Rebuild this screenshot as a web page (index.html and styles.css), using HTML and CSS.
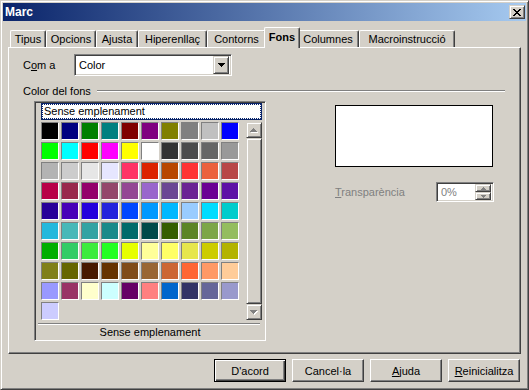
FILE: index.html
```html
<!DOCTYPE html>
<html lang="ca">
<head>
    <meta charset="UTF-8">
    <title>Marc</title>
    <link rel="stylesheet" href="styles.css">
</head>
<body>

<div class="window">
    <div class="titlebar">
        <span class="title">Marc</span>
        <div class="close raised">
            <svg width="8" height="7" viewBox="0 0 8 7" shape-rendering="crispEdges"><path d="M0 0h2v1H0zM6 0h2v1H6zM1 1h2v1H1zM5 1h2v1H5zM2 2h4v1H2zM3 3h2v1H3zM2 4h4v1H2zM1 5h2v1H1zM5 5h2v1H5zM0 6h2v1H0zM6 6h2v1H6z" fill="#000"/></svg>
        </div>
    </div>

    <div class="tabs">
        <div class="tab" style="width:36px">Tipus</div>
        <div class="tab" style="width:50px">Opcions</div>
        <div class="tab" style="width:42px">Ajusta</div>
        <div class="tab" style="width:69px">Hiperenllaç</div>
        <div class="tab" style="width:59px">Contorns</div>
        <div class="tab active" style="width:36px">Fons</div>
        <div class="tab" style="width:61px">Columnes</div>
        <div class="tab" style="width:96px">Macroinstrucció</div>
    </div>

    <div class="panel">
        <div class="row-as">
            <span class="label-as">C<u>o</u>m a</span>
            <div class="combo sunken">
                <span class="combo-text">Color</span>
                <div class="combo-btn raised">
                    <svg width="7" height="4" viewBox="0 0 7 4" shape-rendering="crispEdges"><path d="M0 0h7v1H6v1H5v1H4v1H3V3H2V2H1V1H0z" fill="#000"/></svg>
                </div>
            </div>
        </div>

        <div class="group-head">
            <span>Color del fons</span>
            <span class="rule"></span>
        </div>

        <div class="fill-area">
            <div class="palette sunken">
                <div class="none-item">Sense emplenament</div>
                <div class="palette-body">
                    <div class="swatches">
                        <span style="background:#000000"></span><span style="background:#000080"></span><span style="background:#008000"></span><span style="background:#008080"></span><span style="background:#800000"></span><span style="background:#800080"></span><span style="background:#808000"></span><span style="background:#808080"></span><span style="background:#c0c0c0"></span><span style="background:#0000ff"></span>
                        <span style="background:#00ff00"></span><span style="background:#00ffff"></span><span style="background:#ff0000"></span><span style="background:#ff00ff"></span><span style="background:#ffff00"></span><span style="background:#ffffff"></span><span style="background:#333333"></span><span style="background:#4c4c4c"></span><span style="background:#666666"></span><span style="background:#999999"></span>
                        <span style="background:#b3b3b3"></span><span style="background:#cccccc"></span><span style="background:#e6e6e6"></span><span style="background:#e6e6ff"></span><span style="background:#ff3366"></span><span style="background:#dc2300"></span><span style="background:#b84700"></span><span style="background:#ff3333"></span><span style="background:#eb613d"></span><span style="background:#b84747"></span>
                        <span style="background:#b80047"></span><span style="background:#99284c"></span><span style="background:#94006b"></span><span style="background:#94476b"></span><span style="background:#944794"></span><span style="background:#9966cc"></span><span style="background:#6b4794"></span><span style="background:#6b2394"></span><span style="background:#6b0094"></span><span style="background:#5e11a6"></span>
                        <span style="background:#280099"></span><span style="background:#4700b8"></span><span style="background:#2300dc"></span><span style="background:#2323dc"></span><span style="background:#0047ff"></span><span style="background:#0099ff"></span><span style="background:#00b8ff"></span><span style="background:#99ccff"></span><span style="background:#00dcff"></span><span style="background:#00cccc"></span>
                        <span style="background:#23b8dc"></span><span style="background:#47b8b8"></span><span style="background:#33a3a3"></span><span style="background:#198a8a"></span><span style="background:#006b6b"></span><span style="background:#004a4a"></span><span style="background:#355e00"></span><span style="background:#5c8526"></span><span style="background:#7da647"></span><span style="background:#94bd5e"></span>
                        <span style="background:#00ae00"></span><span style="background:#33cc66"></span><span style="background:#3deb3d"></span><span style="background:#23ff23"></span><span style="background:#e6ff00"></span><span style="background:#ffff99"></span><span style="background:#ffff66"></span><span style="background:#e6e64c"></span><span style="background:#cccc00"></span><span style="background:#b3b300"></span>
                        <span style="background:#808019"></span><span style="background:#666600"></span><span style="background:#471900"></span><span style="background:#663300"></span><span style="background:#804c19"></span><span style="background:#996633"></span><span style="background:#cc6633"></span><span style="background:#ff6633"></span><span style="background:#ff9966"></span><span style="background:#ffcc99"></span>
                        <span style="background:#9999ff"></span><span style="background:#993366"></span><span style="background:#ffffcc"></span><span style="background:#ccffff"></span><span style="background:#660066"></span><span style="background:#ff8080"></span><span style="background:#0066cc"></span><span style="background:#333366"></span><span style="background:#666699"></span><span style="background:#9999cc"></span>
                        <span style="background:#ccccff"></span>
                    </div>
                    <div class="scroll">
                        <div class="sbtn raised">
                            <svg width="8" height="5" viewBox="0 0 8 5" shape-rendering="crispEdges"><path d="M4 1h1v1h1v1h1v1h1v1H1V4h1V3h1V2h1z" fill="#fff"/><path d="M3 0h1v1h1v1h1v1h1v1H0V3h1V2h1V1h1z" fill="#808080"/></svg>
                        </div>
                        <div class="thumb raised"></div>
                        <div class="sbtn raised">
                            <svg width="8" height="5" viewBox="0 0 8 5" shape-rendering="crispEdges"><path d="M1 1h7v1H7v1H6v1H5v1H4V4H3V3H2V2H1z" fill="#fff"/><path d="M0 0h7v1H6v1H5v1H4v1H3V3H2V2H1V1H0z" fill="#808080"/></svg>
                        </div>
                    </div>
                </div>
                <div class="separator"></div>
                <div class="palette-foot">Sense emplenament</div>
            </div>

            <div class="side">
                <div class="preview"></div>
                <div class="transp-row">
                    <span class="transp-label"><u>T</u>ransparència</span>
                    <div class="spin sunken">
                        <span class="spin-text">0%</span>
                        <div class="spin-btns">
                            <div class="spin-btn raised">
                                <svg width="5" height="3" viewBox="0 0 5 3" shape-rendering="crispEdges"><path d="M2 0h1v1h1v1h1v1H0V2h1V1h1z" fill="#808080"/></svg>
                            </div>
                            <div class="spin-btn raised">
                                <svg width="5" height="3" viewBox="0 0 5 3" shape-rendering="crispEdges"><path d="M0 0h5v1H4v1H3v1H2V2H1V1H0z" fill="#808080"/></svg>
                            </div>
                        </div>
                    </div>
                </div>
            </div>
        </div>
    </div>

    <div class="buttons">
        <button class="btn default">D'acord</button>
        <button class="btn">Cancel·la</button>
        <button class="btn"><u>A</u>juda</button>
        <button class="btn"><u>R</u>einicialitza</button>
    </div>
</div>

</body>
</html>
```

FILE: styles.css
```css
* {
    box-sizing: border-box;
}
body {
    margin: 0;
    background-color: #d4d0c8;
    font-family: "Liberation Sans", Arial, sans-serif;
    font-size: 11px;
    color: #000;
}
u {
    text-decoration: underline;
    text-underline-offset: 1px;
}
.window {
    width: 529px;
    height: 390px;
    padding: 2px;
    border: 1px solid;
    border-color: #d4d0c8 #404040 #404040 #d4d0c8;
    box-shadow: inset 1px 1px #fff, inset -1px -1px #808080;
    display: flex;
    flex-direction: column;
}
.raised {
    background-color: #d4d0c8;
    border: 1px solid;
    border-color: #d4d0c8 #404040 #404040 #d4d0c8;
    box-shadow: inset 1px 1px #fff, inset -1px -1px #808080;
}
.sunken {
    border: 1px solid;
    border-color: #808080 #fff #fff #808080;
    box-shadow: inset 1px 1px #404040, inset -1px -1px #d4d0c8;
}

/* title bar */
.titlebar {
    height: 18px;
    background: linear-gradient(to right, #0a246a, #a6caf0);
    display: flex;
    align-items: center;
    justify-content: space-between;
    padding: 0 1px 0 2px;
}
.title {
    color: #fff;
    font-weight: bold;
    font-size: 12px;
}
.close {
    width: 16px;
    height: 14px;
    display: flex;
    align-items: center;
    justify-content: center;
}
.close svg {
    margin-left: -1px;
}

/* tabs */
.tabs {
    margin-top: 6px;
    height: 20px;
    padding-left: 7px;
    display: flex;
    align-items: flex-end;
    position: relative;
    z-index: 1;
}
.tab {
    height: 17px;
    border-top: 1px solid #fff;
    border-left: 1px solid #fff;
    border-right: 1px solid #404040;
    border-radius: 2px 2px 0 0;
    box-shadow: inset -1px 0 #808080;
    display: flex;
    align-items: center;
    justify-content: center;
    white-space: nowrap;
    background-color: #d4d0c8;
}
.tab.active {
    height: 21px;
    margin: 0 -2px -1px;
    font-weight: bold;
    padding-bottom: 2px;
    position: relative;
    z-index: 2;
}
.tab.active + .tab {
    border-left: none;
}

/* panel */
.panel {
    margin-left: 5px;
    width: 513px;
    height: 307px;
    border: 1px solid;
    border-color: #fff #404040 #404040 #fff;
    box-shadow: inset -1px -1px #808080;
    padding: 6px 15px 0 14px;
}
.row-as {
    display: flex;
    align-items: center;
    height: 22px;
}
.label-as {
    width: 51px;
}
.combo {
    width: 158px;
    height: 22px;
    background-color: #fff;
    padding: 2px;
    display: flex;
    align-items: center;
}
.combo-text {
    padding-left: 2px;
    flex: 1;
}
.combo-btn {
    width: 16px;
    height: 18px;
    display: flex;
    align-items: center;
    justify-content: center;
}
.group-head {
    margin-top: 8px;
    height: 14px;
    display: flex;
    align-items: center;
}
.rule {
    flex: 1;
    margin-left: 6px;
    height: 2px;
    border-top: 1px solid #808080;
    border-bottom: 1px solid #fff;
}

/* colour list */
.fill-area {
    margin-top: 3px;
    margin-left: 11px;
    display: flex;
}
.palette {
    width: 232px;
    height: 240px;
    padding: 1px 0 0 6px;
    display: flex;
    flex-direction: column;
}
.none-item {
    width: 221px;
    height: 17px;
    background-color: #fff;
    border: 1px solid #0a246a;
    outline: 1px dotted #0a246a;
    outline-offset: -2px;
    padding-left: 2px;
    line-height: 15px;
}
.palette-body {
    margin-top: 2px;
    height: 198px;
    display: flex;
}
.swatches {
    display: grid;
    grid-template-columns: repeat(10, 18px);
    grid-auto-rows: 18px;
    gap: 2px;
    align-content: start;
}
.swatches span {
    border: 1px solid;
    border-color: #808080 #fff #fff #808080;
}
.scroll {
    margin-left: 7px;
    width: 16px;
    display: flex;
    flex-direction: column;
}
.sbtn {
    height: 16px;
    display: flex;
    align-items: center;
    justify-content: center;
}
.thumb {
    flex: 1;
}
.separator {
    margin: 3px 0 0 -3px;
    width: 222px;
    height: 2px;
    border-top: 1px solid #808080;
    border-bottom: 1px solid #fff;
}
.palette-foot {
    margin-left: -6px;
    height: 13px;
    line-height: 14px;
    text-align: center;
}

/* right side */
.side {
    margin-left: 69px;
}
.preview {
    margin-top: 4px;
    width: 158px;
    height: 62px;
    border: 1px solid #000;
    background-color: #fff;
}
.transp-row {
    margin-top: 15px;
    height: 20px;
    display: flex;
    align-items: center;
}
.transp-label {
    width: 101px;
    color: #808080;
}
.spin {
    width: 58px;
    height: 20px;
    background-color: #fff;
    padding: 2px;
    display: flex;
    align-items: center;
}
.spin-text {
    flex: 1;
    padding-left: 2px;
    color: #808080;
}
.spin-btns {
    width: 16px;
    height: 16px;
    display: flex;
    flex-direction: column;
}
.spin-btn {
    height: 8px;
    display: flex;
    align-items: center;
    justify-content: center;
}

/* bottom buttons */
.buttons {
    margin-top: 5px;
    padding-right: 6px;
    display: flex;
    justify-content: flex-end;
    gap: 6px;
}
.btn {
    width: 72px;
    height: 23px;
    font-family: inherit;
    font-size: 11px;
    color: #000;
    background-color: #d4d0c8;
    border: 1px solid;
    border-color: #fff #404040 #404040 #fff;
    box-shadow: inset -1px -1px #808080;
    padding: 0;
}
.btn.default {
    border-color: #000;
    box-shadow: inset 1px 1px #fff, inset -1px -1px #404040, inset -2px -2px #808080;
}
```
